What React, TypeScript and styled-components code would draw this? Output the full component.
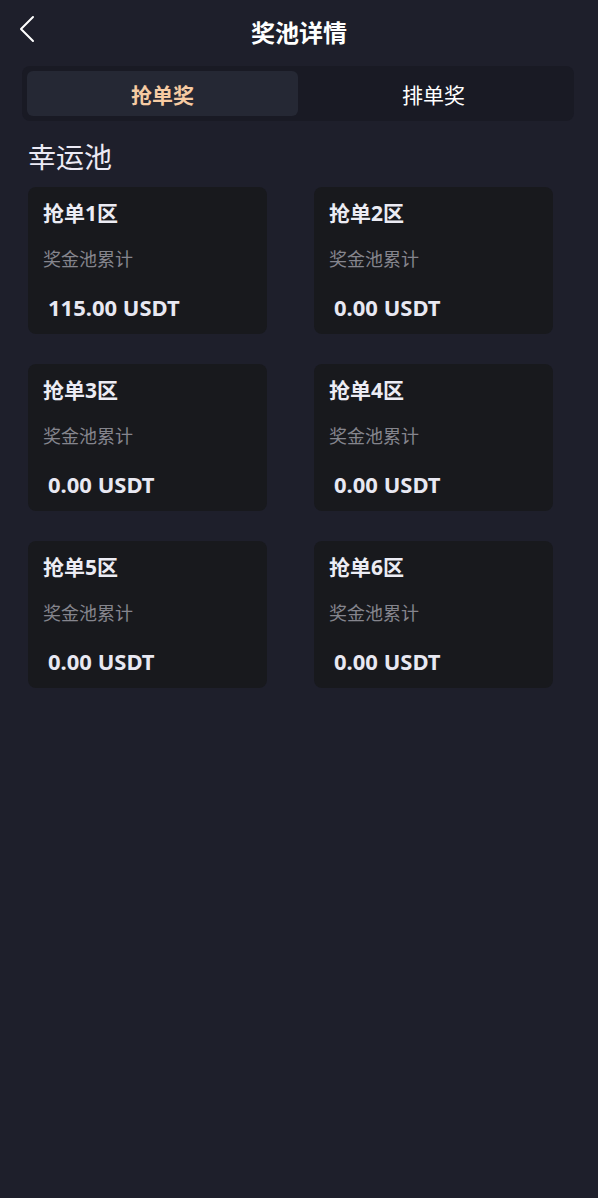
import React, { useState } from 'react';
import styled, { createGlobalStyle } from 'styled-components';

const GlobalStyle = createGlobalStyle`
  html, body {
    margin: 0;
    padding: 0;
    background: #1e1f2b;
  }
  body {
    font-family: "Noto Sans", "Noto Sans CJK SC", sans-serif;
    min-height: 100vh;
  }
  * {
    box-sizing: border-box;
  }
`;

const Page = styled.div`
  min-height: 1198px;
  background: #1e1f2b;
  color: #ffffff;
`;

const Header = styled.header`
  position: relative;
  height: 66px;
  display: flex;
  align-items: center;
  justify-content: center;
`;

const BackButton = styled.button`
  position: absolute;
  left: 16px;
  top: 13px;
  width: 22px;
  height: 32px;
  padding: 0;
  border: none;
  background: none;
  cursor: pointer;
  display: flex;
  align-items: center;
  justify-content: center;
`;

const Title = styled.h1`
  margin: 0;
  font-size: 24px;
  line-height: 32px;
  font-weight: 700;
  color: #ffffff;
`;

const TabBar = styled.div`
  margin: 0 24px 0 22px;
  padding: 5px;
  border-radius: 8px;
  background: #191a24;
  display: flex;
`;

const Tab = styled.button<{ $active: boolean }>`
  flex: 1;
  height: 45px;
  border: none;
  border-radius: 6px;
  background: ${props => (props.$active ? '#252834' : 'transparent')};
  color: ${props => (props.$active ? '#f6cba3' : '#ffffff')};
  font-family: inherit;
  font-size: 21px;
  font-weight: ${props => (props.$active ? 700 : 400)};
  cursor: pointer;
`;

const SectionTitle = styled.h2`
  margin: 19px 0 0 28px;
  font-size: 28px;
  line-height: 34px;
  font-weight: 400;
  color: #eceaf5;
`;

const Grid = styled.div`
  margin: 13px 45px 0 28px;
  display: grid;
  grid-template-columns: 239px 239px;
  column-gap: 47px;
  row-gap: 30px;
`;

const Card = styled.div`
  height: 147px;
  padding: 13px 15px 10px;
  border-radius: 8px;
  background: #18191d;
  display: flex;
  flex-direction: column;
`;

const CardTitle = styled.div`
  font-size: 21px;
  line-height: 26px;
  font-weight: 700;
  color: #ececf4;
`;

const CardLabel = styled.div`
  margin-top: 21px;
  font-size: 18px;
  line-height: 24px;
  color: #85858d;
`;

const CardValue = styled.div`
  margin-top: 22px;
  padding-left: 5px;
  font-size: 22px;
  line-height: 28px;
  font-weight: 700;
  color: #e8e8f2;
`;

const pools = [
  { name: '抢单1区', amount: '115.00' },
  { name: '抢单2区', amount: '0.00' },
  { name: '抢单3区', amount: '0.00' },
  { name: '抢单4区', amount: '0.00' },
  { name: '抢单5区', amount: '0.00' },
  { name: '抢单6区', amount: '0.00' },
];

const tabs = ['抢单奖', '排单奖'];

const App = () => {
  const [activeTab, setActiveTab] = useState(0);

  return (
    <Page>
      <GlobalStyle />
      <Header>
        <BackButton aria-label="返回">
          <svg width="18" height="28" viewBox="0 0 18 28" fill="none">
            <path d="M15 2 L3 14 L15 26" stroke="#ffffff" strokeWidth="2" strokeLinecap="round" strokeLinejoin="round" />
          </svg>
        </BackButton>
        <Title>奖池详情</Title>
      </Header>
      <TabBar>
        {tabs.map((tab, i) => (
          <Tab key={tab} $active={i === activeTab} onClick={() => setActiveTab(i)}>
            {tab}
          </Tab>
        ))}
      </TabBar>
      <SectionTitle>幸运池</SectionTitle>
      <Grid>
        {pools.map(pool => (
          <Card key={pool.name}>
            <CardTitle>{pool.name}</CardTitle>
            <CardLabel>奖金池累计</CardLabel>
            <CardValue>{pool.amount} USDT</CardValue>
          </Card>
        ))}
      </Grid>
    </Page>
  );
};

export default App;
